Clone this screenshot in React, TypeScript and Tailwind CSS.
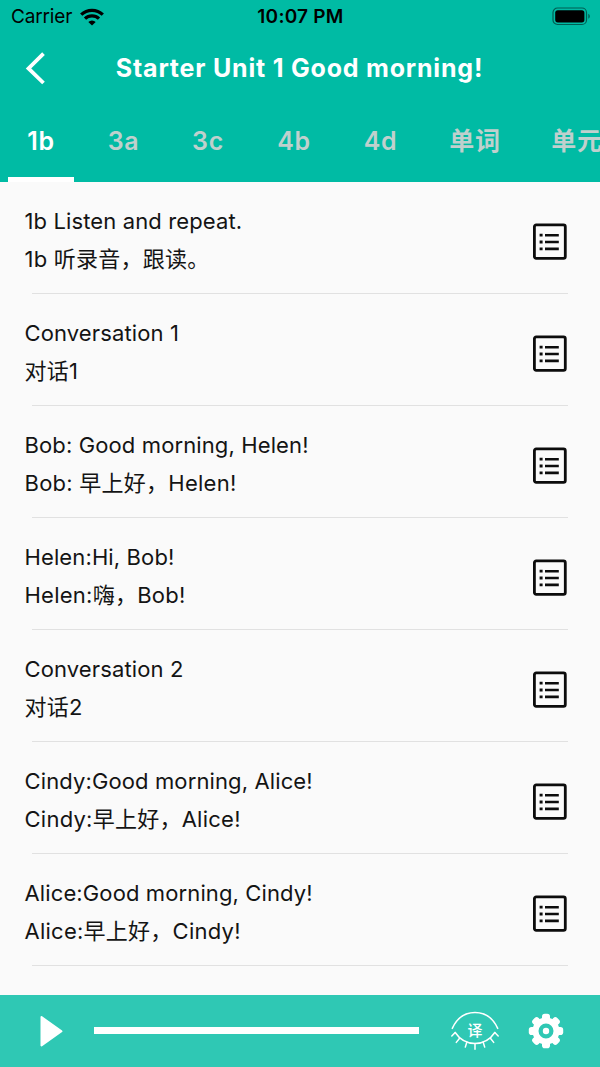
import React, { useState } from 'react';

const tabs = [
  { label: '1b', width: 'w-[66px]' },
  { label: '3a', width: 'w-[67px]' },
  { label: '3c', width: 'w-[70px]' },
  { label: '4b', width: 'w-[70px]' },
  { label: '4d', width: 'w-[71px]' },
  { label: '单词', width: 'w-[86px]' },
  { label: '单元', width: 'w-[86px]' },
];

const lines = [
  { id: 1, en: '1b Listen and repeat.', zh: '1b 听录音，跟读。' },
  { id: 2, en: 'Conversation 1', zh: '对话1' },
  { id: 3, en: 'Bob: Good morning, Helen!', zh: 'Bob: 早上好，Helen!' },
  { id: 4, en: 'Helen:Hi, Bob!', zh: 'Helen:嗨，Bob!' },
  { id: 5, en: 'Conversation 2', zh: '对话2' },
  { id: 6, en: 'Cindy:Good morning, Alice!', zh: 'Cindy:早上好，Alice!' },
  { id: 7, en: 'Alice:Good morning, Cindy!', zh: 'Alice:早上好，Cindy!' },
];

const gearAngles = [0, 45, 90, 135, 180, 225, 270, 315];

const WifiIcon = () => (
  <svg width="24" height="18" viewBox="0 0 24 18" fill="none" stroke="#000" strokeWidth="3.2">
    <path d="M1.2 6.7a15.4 15.4 0 0 1 21.6 0" />
    <path d="M5 10.7a10 10 0 0 1 14 0" />
    <path d="M12 17.6 8.3 13.9a5.3 5.3 0 0 1 7.4 0Z" fill="#000" stroke="none" />
  </svg>
);

const BatteryIcon = () => (
  <svg width="39" height="19" viewBox="0 0 39 19" fill="none">
    <rect x="1" y="1" width="33.5" height="16.5" rx="4.5" stroke="#000" strokeOpacity="0.5" strokeWidth="1.2" />
    <rect x="3.2" y="3.2" width="29.2" height="12.2" rx="2.6" fill="#000" />
    <path d="M36.3 6.7c2 .8 2 4.2 0 5Z" fill="#000" fillOpacity="0.5" />
  </svg>
);

const ListIcon = () => (
  <svg width="36" height="38" viewBox="0 0 36 38" fill="none" stroke="#0c0c0c">
    <rect x="2.4" y="2.9" width="30.9" height="33.5" rx="1.8" strokeWidth="2.8" />
    <path d="M13 13.2h13.8M13 20h13.8M13 26.9h13.8" strokeWidth="2.6" />
    <path d="M7.6 13.2h3M7.6 20h3M7.6 26.9h3" strokeWidth="2.8" />
  </svg>
);

const TranslateIcon = () => (
  <svg width="50" height="42" viewBox="0 0 50 42" fill="none" stroke="#fff" strokeWidth="1.5" strokeLinecap="round">
    <path d="M2.3 18.4C7 8 15.4 2.4 25 2.4S43 8 47.7 18.4" />
    <path d="M5.2 22.5C10 29.8 17 33.4 25 33.4s15-3.6 19.8-10.9" />
    <path d="M5.2 22.5 1.8 26M9.6 28.2l-3.3 4.2M16.8 32.3l-1.5 4.8M25 33.6v5.6M33.2 32.3l1.5 4.8M40.4 28.2l3.3 4.2M44.8 22.5l3.4 3.5" />
    <text
      x="25"
      y="26"
      textAnchor="middle"
      fill="#fff"
      stroke="none"
      className="font-['Noto_Sans_CJK_SC',sans-serif] text-[15px] font-medium"
    >
      译
    </text>
  </svg>
);

const GearIcon = () => (
  <svg width="36" height="36" viewBox="0 0 36 36">
    <g fill="#fff">
      {gearAngles.map((angle) => (
        <rect key={angle} x="14" y="0.8" width="8" height="9" rx="2.8" transform={`rotate(${angle} 18 18)`} />
      ))}
    </g>
    <circle cx="18" cy="18" r="10.5" fill="none" stroke="#fff" strokeWidth="6" />
    <circle cx="18" cy="18" r="3.2" fill="#fff" />
  </svg>
);

const App = () => {
  const [activeTab, setActiveTab] = useState('1b');

  return (
    <div className="flex flex-col w-[600px] h-[1067px] overflow-hidden bg-[#fafafa] font-[Inter,'Noto_Sans_CJK_SC',sans-serif]">
      <header className="h-[182px] shrink-0 flex flex-col bg-[#00bba4]">
        <div className="h-[33px] grid grid-cols-3 items-center pl-[11px] pr-[9px] text-black">
          <div className="flex items-center gap-2">
            <span className="pt-[2px] text-[19px] tracking-[-0.15px]">Carrier</span>
            <WifiIcon />
          </div>
          <span className="pt-px pr-px text-center text-[19px] font-semibold tracking-[0.25px] whitespace-nowrap">10:07 PM</span>
          <div className="flex justify-end">
            <BatteryIcon />
          </div>
        </div>

        <div className="h-[70px] flex items-center pl-6">
          <button className="w-6 h-9" aria-label="Back">
            <svg width="24" height="36" viewBox="0 0 24 36" fill="none" stroke="#fff" strokeWidth="3.8">
              <path d="M19.5 3.7 4.5 18.4 19.5 33" />
            </svg>
          </button>
          <h1 className="flex-1 pt-[2px] pr-[49px] text-center text-[25px] font-bold text-white tracking-[0.8px] whitespace-nowrap">
            Starter Unit 1 Good morning!
          </h1>
        </div>

        <nav className="h-[79px] flex gap-4 pl-2 overflow-hidden">
          {tabs.map((tab) => (
            <button
              key={tab.label}
              onClick={() => setActiveTab(tab.label)}
              className={`${tab.width} shrink-0 h-full pt-1 border-b-[5px] text-[25px] font-semibold tracking-[0.7px] whitespace-nowrap ${
                activeTab === tab.label ? 'border-white text-white' : 'border-transparent text-[#bfd0cd]'
              }`}
            >
              {tab.label}
            </button>
          ))}
        </nav>
      </header>

      <main className="flex-1 overflow-hidden">
        {lines.map((line) => (
          <div key={line.id} className="h-28 flex flex-col">
            <div className="flex-1 flex items-center justify-between pl-[24.5px] pr-8 pt-[7px]">
              <div className="pb-[2px] text-[22px] leading-[38px] text-[#141414]">
                <p className="tracking-[0.12px]">{line.en}</p>
                <p className="tracking-[0.25px]">{line.zh}</p>
              </div>
              <ListIcon />
            </div>
            <div className="h-px mx-8 bg-[#e1e1e1]" />
          </div>
        ))}
      </main>

      <footer className="h-[72px] shrink-0 flex items-center pl-[39px] pr-[36px] bg-[#2fc8b4]">
        <svg width="25" height="34" viewBox="0 0 25 34" fill="#fff" stroke="#fff" strokeWidth="2" strokeLinejoin="round">
          <path d="M2.5 3 22.5 17.2 2.5 31.5Z" />
        </svg>
        <div className="w-[325px] h-[7px] mb-px ml-[30px] bg-white" />
        <div className="ml-auto flex items-center gap-[28px]">
          <TranslateIcon />
          <GearIcon />
        </div>
      </footer>
    </div>
  );
};

export default App;
